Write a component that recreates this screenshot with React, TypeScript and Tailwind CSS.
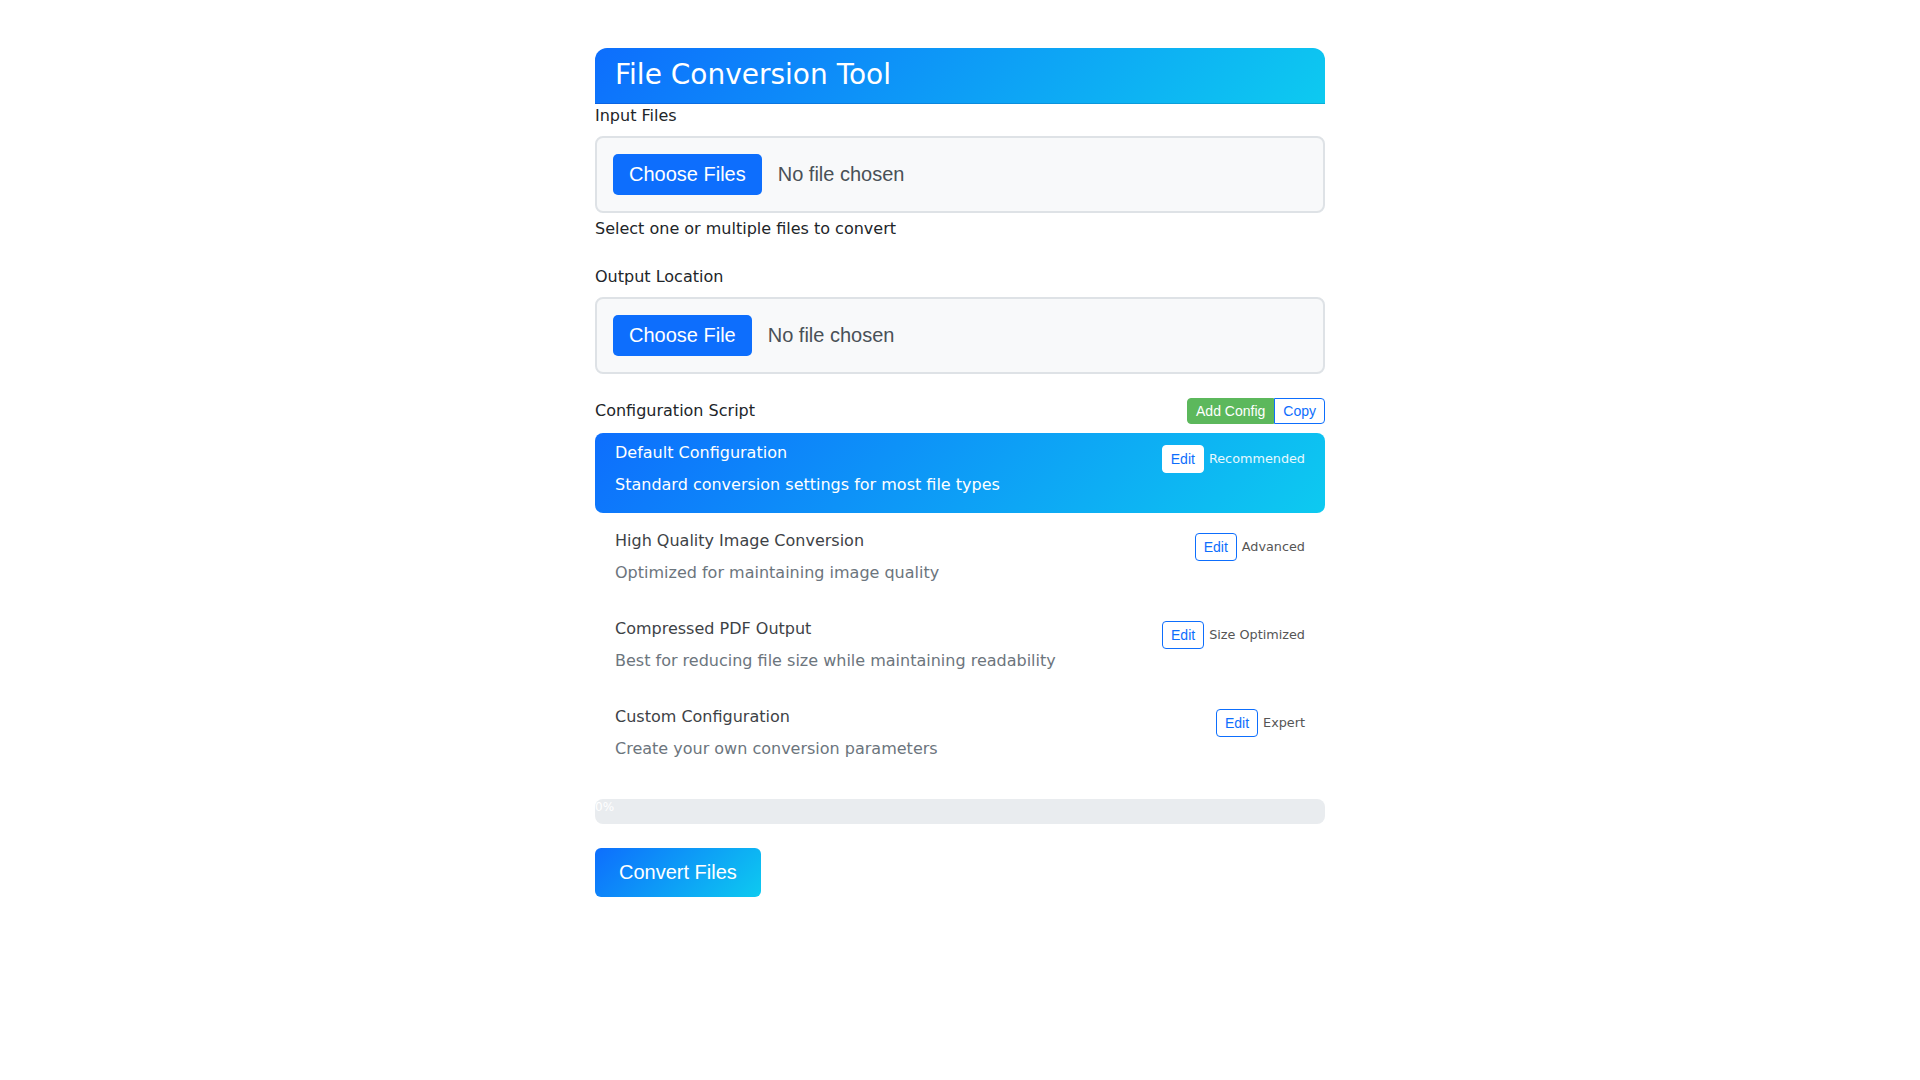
import React from "react";

type Config = {
  title: string;
  desc: string;
  badge: string;
  active?: boolean;
};

const configs: Config[] = [
  {
    title: "Default Configuration",
    desc: "Standard conversion settings for most file types",
    badge: "Recommended",
    active: true,
  },
  {
    title: "High Quality Image Conversion",
    desc: "Optimized for maintaining image quality",
    badge: "Advanced",
  },
  {
    title: "Compressed PDF Output",
    desc: "Best for reducing file size while maintaining readability",
    badge: "Size Optimized",
  },
  {
    title: "Custom Configuration",
    desc: "Create your own conversion parameters",
    badge: "Expert",
  },
];

function FileBox({ label }: { label: string }) {
  return (
    <div className="flex items-center rounded-lg border-2 border-[#dee2e6] bg-[#f8f9fa] p-4">
      <span className="h-[41px] rounded-[5px] bg-[#0d6efd] px-4 font-['Liberation_Sans',Arial,sans-serif] text-[20px] leading-[41px] text-white">
        {label}
      </span>
      <span className="ml-4 font-['Liberation_Sans',Arial,sans-serif] text-[20px] leading-[41px] text-[#495057]">
        No file chosen
      </span>
    </div>
  );
}

function ConfigItem({ c }: { c: Config }) {
  return (
    <div
      className={
        c.active
          ? "rounded-lg bg-[linear-gradient(135deg,#0d6efd_0%,#0dcaf0_100%)] px-5 pb-4 pt-2 text-white"
          : "rounded-lg px-5 pb-4 pt-2"
      }
    >
      <div className="flex items-start justify-between">
        <div
          className={
            c.active
              ? "text-base leading-6 text-white"
              : "text-base leading-6 text-[#3d4246]"
          }
        >
          {c.title}
        </div>
        <div className="mt-1 flex items-center gap-[5px]">
          <span
            className={
              c.active
                ? "rounded-[4px] border border-white bg-white px-2 py-[5px] font-['Liberation_Sans',Arial,sans-serif] text-[14px] leading-4 text-[#0d6efd]"
                : "rounded-[4px] border border-[#0d6efd] bg-white px-2 py-[5px] font-['Liberation_Sans',Arial,sans-serif] text-[14px] leading-4 text-[#0d6efd]"
            }
          >
            Edit
          </span>
          <span
            className={
              c.active
                ? "text-[12.8px] leading-4 text-white/90"
                : "text-[12.8px] leading-4 text-[#555]"
            }
          >
            {c.badge}
          </span>
        </div>
      </div>
      <div
        className={
          c.active
            ? "text-base leading-6 text-white"
            : "text-base leading-6 text-[#6c757d]"
        }
      >
        {c.desc}
      </div>
    </div>
  );
}

export default function App() {
  return (
    <div className="min-h-screen bg-white pt-12 font-['DejaVu_Sans',sans-serif] text-[#212529]">
      <div className="mx-auto w-[730px]">
        <div className="rounded-t-[12px] border-b border-black/10 bg-[linear-gradient(135deg,#0d6efd_0%,#0dcaf0_100%)] pb-[11px] pl-5 pt-[10px] text-[28px] leading-[34px] text-white">
          File Conversion Tool
        </div>

        <div className="mb-6">
          <div className="mb-2 text-base leading-6">Input Files</div>
          <FileBox label="Choose Files" />
          <div className="mt-1 text-base leading-6">
            Select one or multiple files to convert
          </div>
        </div>

        <div className="mb-6">
          <div className="mb-2 text-base leading-6">Output Location</div>
          <FileBox label="Choose File" />
        </div>

        <div className="mb-[9px] flex items-center justify-between">
          <div className="text-base leading-6">Configuration Script</div>
          <div className="flex font-['Liberation_Sans',Arial,sans-serif] text-[14px] leading-4">
            <span className="rounded-l-[4px] border border-[#5cb85c] bg-[#5cb85c] px-2 py-1 text-white">
              Add Config
            </span>
            <span className="rounded-r-[4px] border border-[#0d6efd] bg-white px-2 py-1 text-[#0d6efd]">
              Copy
            </span>
          </div>
        </div>

        <div className="mb-[22px] flex flex-col gap-2">
          {configs.map((c) => (
            <ConfigItem key={c.title} c={c} />
          ))}
        </div>

        <div className="mb-6 h-[25px] overflow-hidden rounded-lg bg-[#e9ecef]">
          <div className="text-[12px] leading-[17px] text-white">0%</div>
        </div>

        <button className="h-[49px] rounded-md bg-[linear-gradient(135deg,#0d6efd_0%,#0dcaf0_100%)] px-6 font-['Liberation_Sans',Arial,sans-serif] text-[20px] leading-[49px] text-white">
          Convert Files
        </button>
      </div>
    </div>
  );
}
